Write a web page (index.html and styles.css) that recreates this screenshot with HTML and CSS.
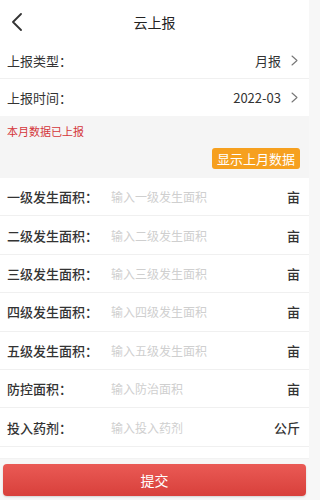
FILE: index.html
```html
<!DOCTYPE html>
<html lang="zh-CN">
<head>
<meta charset="utf-8">
<title>云上报</title>
<link rel="stylesheet" href="styles.css">
</head>
<body>
<div class="page">
  <header class="header">
    <svg class="back" width="12" height="18" viewBox="0 0 12 18"><polyline points="10,1 2,9 10,17" fill="none" stroke="#333" stroke-width="1.8" stroke-linecap="round" stroke-linejoin="round"/></svg>
    <div class="title">云上报</div>
  </header>
  <div class="row sel">
    <div class="label">上报类型：</div>
    <div class="value">月报</div>
    <svg class="arrow" width="7" height="11" viewBox="0 0 7 11"><polyline points="1,1 6,5.5 1,10" fill="none" stroke="#777" stroke-width="1.1" stroke-linecap="round" stroke-linejoin="round"/></svg>
  </div>
  <div class="row sel">
    <div class="label">上报时间：</div>
    <div class="value">2022-03</div>
    <svg class="arrow" width="7" height="11" viewBox="0 0 7 11"><polyline points="1,1 6,5.5 1,10" fill="none" stroke="#777" stroke-width="1.1" stroke-linecap="round" stroke-linejoin="round"/></svg>
  </div>
  <section class="notice">
    <div class="notice-text">本月数据已上报</div>
    <div class="notice-actions"><span class="btn-last">显示上月数据</span></div>
  </section>
  <div class="form">
    <div class="frow"><div class="flabel">一级发生面积：</div><div class="ph">输入一级发生面积</div><div class="unit">亩</div></div>
    <div class="frow"><div class="flabel">二级发生面积：</div><div class="ph">输入二级发生面积</div><div class="unit">亩</div></div>
    <div class="frow"><div class="flabel">三级发生面积：</div><div class="ph">输入三级发生面积</div><div class="unit">亩</div></div>
    <div class="frow"><div class="flabel">四级发生面积：</div><div class="ph">输入四级发生面积</div><div class="unit">亩</div></div>
    <div class="frow"><div class="flabel">五级发生面积：</div><div class="ph">输入五级发生面积</div><div class="unit">亩</div></div>
    <div class="frow"><div class="flabel">防控面积：</div><div class="ph">输入防治面积</div><div class="unit">亩</div></div>
    <div class="frow"><div class="flabel">投入药剂：</div><div class="ph">输入投入药剂</div><div class="unit">公斤</div></div>
    <div class="spacer"></div>
  </div>
  <div class="footer">
    <div class="submit">提交</div>
  </div>
</div>
</body>
</html>
```
FILE: styles.css
```css
* { box-sizing: border-box; }
html, body { margin: 0; padding: 0; }
body {
  font-family: "Noto Sans CJK SC", "Noto Sans", sans-serif;
  color: #333;
  background: #f7f7f7;
}
.page { width: 309px; height: 500px; overflow: hidden; display: flex; flex-direction: column; }
.header {
  height: 42px;
  background: #fff;
  display: flex;
  align-items: center;
  justify-content: center;
  position: relative;
}
.back { position: absolute; left: 11px; top: 13px; }
.title { font-size: 14px; line-height: 20px; color: #222; margin-top: 2px; }
.row {
  height: 37px;
  background: #fff;
  display: flex;
  align-items: center;
  padding: 0 11px 0 7px;
  border-bottom: 1px solid #f0f0f0;
}
.row + .row { border-bottom: none; height: 37px; }
.label { font-size: 13px; color: #333; flex: 1; }
.value { font-size: 13px; color: #333; margin-right: 10px; }
.arrow { display: block; }
.notice {
  background: #f5f5f5;
  padding: 7px 9px 8px 7px;
  height: 62px;
}
.notice-text { font-size: 11px; line-height: 16px; color: #d4373b; }
.notice-actions { display: flex; justify-content: flex-end; margin-top: 9px; }
.btn-last {
  display: inline-block;
  height: 21px;
  line-height: 21px;
  padding: 0 5px;
  font-size: 13px;
  color: #fff;
  background: #f6a01f;
  border-radius: 3px;
}
.form { background: #fff; }
.frow {
  height: 38.4px;
  display: flex;
  align-items: center;
  padding: 0 9px 0 7px;
  border-bottom: 1px solid #f0f0f0;
}
.flabel { width: 104px; font-size: 13px; font-weight: 500; color: #333; }
.ph { flex: 1; font-size: 12px; color: #cfcfcf; }
.unit { font-size: 13px; font-weight: 500; color: #333; }
.spacer { height: 12px; border-bottom: 1px solid #f2f2f2; }
.footer { flex: 1; padding: 5px 3px 0; }
.submit {
  height: 32px;
  line-height: 32px;
  text-align: center;
  color: #fff;
  font-size: 14px;
  border-radius: 4px;
  background: linear-gradient(#ea5a55, #d8403b);
  box-shadow: 0 1px 2px rgba(0,0,0,0.15);
}
```
